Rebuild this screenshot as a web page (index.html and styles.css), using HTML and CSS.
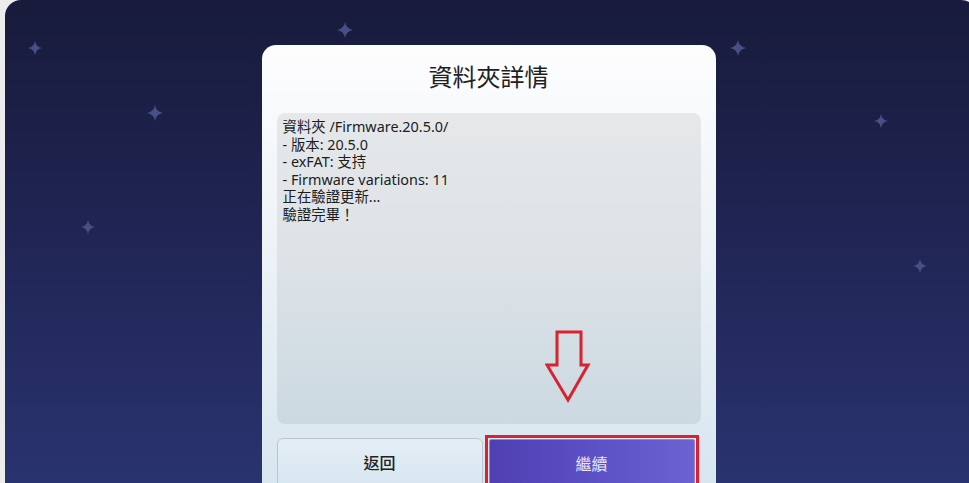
FILE: index.html
```html
<!DOCTYPE html>
<html lang="zh-Hant">
<head>
  <meta charset="UTF-8" />
  <meta name="viewport" content="width=device-width, initial-scale=1" />
  <title>資料夾詳情</title>
  <link rel="stylesheet" href="styles.css">
</head>
<body>
  <div class="screen">
    <!-- background sparkles -->
    <svg class="star" style="left:23px;top:41px" width="14" height="14" viewBox="0 0 14 14"><path d="M7 0 Q8 6 14 7 Q8 8 7 14 Q6 8 0 7 Q6 6 7 0Z"/></svg>
    <svg class="star" style="left:142px;top:105px" width="16" height="16" viewBox="0 0 14 14"><path d="M7 0 Q8 6 14 7 Q8 8 7 14 Q6 8 0 7 Q6 6 7 0Z"/></svg>
    <svg class="star" style="left:332px;top:22px" width="16" height="16" viewBox="0 0 14 14"><path d="M7 0 Q8 6 14 7 Q8 8 7 14 Q6 8 0 7 Q6 6 7 0Z"/></svg>
    <svg class="star" style="left:725px;top:40px" width="16" height="16" viewBox="0 0 14 14"><path d="M7 0 Q8 6 14 7 Q8 8 7 14 Q6 8 0 7 Q6 6 7 0Z"/></svg>
    <svg class="star" style="left:869px;top:114px" width="14" height="14" viewBox="0 0 14 14"><path d="M7 0 Q8 6 14 7 Q8 8 7 14 Q6 8 0 7 Q6 6 7 0Z"/></svg>
    <svg class="star" style="left:76px;top:220px" width="14" height="14" viewBox="0 0 14 14"><path d="M7 0 Q8 6 14 7 Q8 8 7 14 Q6 8 0 7 Q6 6 7 0Z"/></svg>
    <svg class="star" style="left:908px;top:259px" width="14" height="14" viewBox="0 0 14 14"><path d="M7 0 Q8 6 14 7 Q8 8 7 14 Q6 8 0 7 Q6 6 7 0Z"/></svg>

    <div class="dialog">
      <h1 class="dialog-title">資料夾詳情</h1>

      <div class="log-box">
        <div>資料夾 /Firmware.20.5.0/</div>
        <div>- 版本: 20.5.0</div>
        <div>- exFAT: 支持</div>
        <div>- Firmware variations: 11</div>
        <div>正在驗證更新...</div>
        <div>驗證完畢！</div>

        <svg class="hint-arrow" width="46" height="74" viewBox="0 0 46 74">
          <polygon points="12,2 36,2 36,35 43,35 23,70 2,35 12,35" />
        </svg>
      </div>

      <div class="actions">
        <button class="btn btn-back">返回</button>
        <div class="focus-mark">
          <button class="btn btn-next">繼續</button>
        </div>
      </div>
    </div>
  </div>
</body>
</html>
```

FILE: styles.css
```css
html, body {
  margin: 0;
  padding: 0;
  height: 100%;
  overflow: hidden;
}

body {
  background: #ececec;
  font-family: "Noto Sans", "Noto Sans CJK TC", sans-serif;
  padding-left: 5px;
}

.screen {
  position: relative;
  width: 972px;
  height: 100%;
  border-radius: 16px 16px 0 0;
  background: linear-gradient(180deg, #181b3b 0%, #1f2452 45%, #29336f 100%);
  display: flex;
  justify-content: center;
  padding-top: 45px;
  box-sizing: border-box;
  padding-right: 8px;
}

.star {
  position: absolute;
  fill: #484f84;
  filter: blur(0.6px);
}

.dialog {
  width: 454px;
  height: 480px;
  margin-left: 3px;
  box-sizing: border-box;
  padding: 0 15px;
  border-radius: 14px 14px 0 0;
  background: linear-gradient(180deg, #fdfdfe 0%, #eef3f7 40%, #d4e4ee 100%);
  display: flex;
  flex-direction: column;
}

.dialog-title {
  margin: 0 0 8px;
  height: 60px;
  line-height: 62px;
  text-align: center;
  font-family: "Noto Sans CJK TC", sans-serif;
  font-size: 24px;
  font-weight: 400;
  color: #1f1f1f;
}

.log-box {
  position: relative;
  height: 311px;
  box-sizing: border-box;
  padding: 5px 6px;
  border-radius: 8px;
  background: linear-gradient(180deg, #e6e8ea 0%, #dce2e6 50%, #cbd9e2 100%);
  font-size: 14.4px;
  line-height: 17.6px;
  color: #1c1c1c;
}

.hint-arrow {
  position: absolute;
  left: 268px;
  top: 217px;
  fill: none;
  stroke: #d8232f;
  stroke-width: 3;
  stroke-linejoin: miter;
}

.actions {
  margin-top: 14px;
  display: flex;
  gap: 2px;
  align-items: flex-start;
}

.btn {
  font-family: "Noto Sans CJK TC", sans-serif;
  font-size: 16px;
  font-weight: 500;
  height: 52px;
  padding-bottom: 6px;
  cursor: pointer;
}

.btn-back {
  width: 206px;
  border: 1px solid #b9c6cf;
  border-radius: 6px;
  background: linear-gradient(180deg, #e4eef5 0%, #d6e6f0 100%);
  color: #222;
}

.focus-mark {
  margin-top: -3px;
  width: 214px;
  box-sizing: border-box;
  border: 3px solid #d9222e;
  padding: 1px;
}

.btn-next {
  width: 100%;
  border: 1px solid #8f86dc;
  border-radius: 2px;
  background: linear-gradient(90deg, #4f3fb3 0%, #5d52c6 55%, #6c62d2 100%);
  color: #e9e8f4;
  font-weight: 400;
}
```
